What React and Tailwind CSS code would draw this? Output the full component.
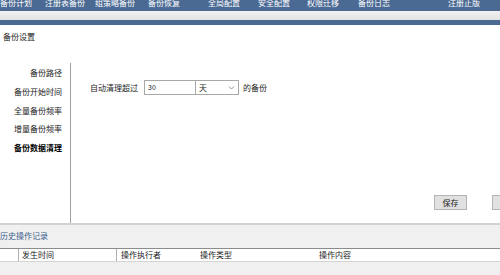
import React from "react";

const navItems = [
  { label: "备份计划", ml: "ml-[0px]" },
  { label: "注册表备份", ml: "ml-[13px]" },
  { label: "组策略备份", ml: "ml-[10px]" },
  { label: "备份恢复", ml: "ml-[13px]" },
  { label: "全局配置", ml: "ml-[28px]" },
  { label: "安全配置", ml: "ml-[18px]" },
  { label: "权限迁移", ml: "ml-[17px]" },
  { label: "备份日志", ml: "ml-[19px]" },
  { label: "注册正版", ml: "ml-[58px]" },
];

const sideItems = ["备份路径", "备份开始时间", "全量备份频率", "增量备份频率", "备份数据清理"];

function App() {
  return (
    <div
      className="w-[500px] h-[275px] overflow-hidden flex flex-col bg-white text-[8px] text-[#222]"
      style={{ fontFamily: '"Noto Sans CJK SC", "Noto Sans", sans-serif' }}
    >
      {/* top nav */}
      <div className="h-[11px] bg-[#4b6a93] flex items-start overflow-hidden text-white shrink-0">
        {navItems.map((n) => (
          <span key={n.label} className={`${n.ml} leading-[8px] -mt-[1px] whitespace-nowrap`}>
            {n.label}
          </span>
        ))}
      </div>
      <div className="h-[9px] bg-gradient-to-b from-[#f2f2f2] to-[#e2e2e2] shrink-0" />
      <div className="h-[5px] bg-[#4b6a93] shrink-0" />

      {/* settings */}
      <div className="h-[198px] flex flex-col shrink-0">
        <div className="h-[38px] pt-[7px] pl-[3px] leading-[10px]">备份设置</div>
        <div className="flex flex-1 min-w-0">
          <div className="w-[71px] shrink-0 border-r border-[#a0a0a0] pr-[8px] pt-[1px] flex flex-col items-end">
            {sideItems.map((s, i) => (
              <div
                key={s}
                className={`h-[18.7px] flex items-center whitespace-nowrap ${
                  i === 4 ? "font-bold text-black" : ""
                }`}
              >
                {s}
              </div>
            ))}
          </div>
          <div className="flex-1 min-w-0 flex flex-col overflow-hidden">
            <div className="mt-[17px] ml-[19px] flex items-center h-[15px]">
              <span className="whitespace-nowrap">自动清理超过</span>
              <div className="ml-[6px] w-[52px] h-[15px] shrink-0 border border-[#a8a8a8] pl-[3px] flex items-center text-[7px]">
                30
              </div>
              <div className="w-[43px] h-[15px] shrink-0 border border-l-0 border-[#a8a8a8] pl-[3px] pr-[3px] flex items-center justify-between">
                <span>天</span>
                <svg width="7" height="5" viewBox="0 0 7 5" className="text-[#888]">
                  <path d="M1 1.5 L3.5 4 L6 1.5" fill="none" stroke="currentColor" strokeWidth="0.9" />
                </svg>
              </div>
              <span className="ml-[4px] whitespace-nowrap">的备份</span>
            </div>
            <div className="mt-auto mb-[13px] pl-[363px] flex gap-[25px]">
              <button className="w-[33px] h-[15px] shrink-0 bg-[#e1e1e1] border border-[#b4b4b4] text-[8px] leading-none">
                保存
              </button>
              <button className="w-[33px] h-[15px] shrink-0 bg-[#e1e1e1] border border-[#b4b4b4] text-[8px] leading-none">
                取消
              </button>
            </div>
          </div>
        </div>
      </div>

      {/* history */}
      <div className="flex-1 border-t-2 border-[#d2d2d2] bg-[#f0f0f0] flex flex-col">
        <div className="pt-[6px] leading-[10px] text-[#3c5d8c] whitespace-nowrap">历史操作记录</div>
        <div className="mt-[7px] h-[14px] bg-white border-t border-[#8c8c8c] border-b border-b-[#d4d4d4] flex items-center">
          <div className="w-[19px] h-full border-r border-[#b0b0b0]" />
          <div className="w-[98px] h-full pl-[3px] border-r border-[#b0b0b0] flex items-center">发生时间</div>
          <div className="w-[83px] h-full pl-[4px] flex items-center">操作执行者</div>
          <div className="w-[119px] h-full flex items-center">操作类型</div>
          <div className="flex-1 h-full flex items-center">操作内容</div>
        </div>
      </div>
    </div>
  );
}

export default App;
